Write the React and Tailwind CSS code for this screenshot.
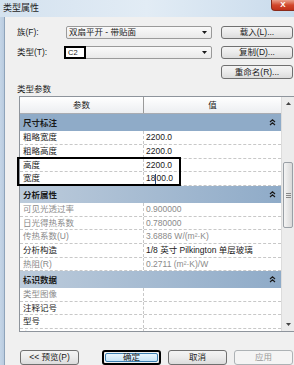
import React from "react";

const groups = [
  {
    name: "尺寸标注",
    bg: "bg-[#8fabc8]",
    rows: [
      { k: "粗略宽度", v: "2200.0", h: "h-[14px]" },
      { k: "粗略高度", v: "2200.0", h: "h-[14px]" },
      { k: "高度", v: "2200.0", h: "h-[13px]" },
      { k: "宽度", v: "1800.0", h: "h-[14px]", cursor: true },
    ],
  },
  {
    name: "分析属性",
    bg: "bg-gradient-to-r from-[#bccbdb] to-[#8fabc8]",
    rows: [
      { k: "可见光透过率", v: "0.900000", h: "h-[14px]", dim: true },
      { k: "日光得热系数", v: "0.780000", h: "h-[13px]", dim: true },
      { k: "传热系数(U)", v: "3.6886 W/(m²·K)", h: "h-[14px]", dim: true },
      { k: "分析构造", v: "1/8 英寸 Pilkington 单层玻璃", h: "h-[14px]" },
      { k: "热阻(R)", v: "0.2711 (m²·K)/W", h: "h-[13px]", dim: true },
    ],
  },
  {
    name: "标识数据",
    bg: "bg-gradient-to-r from-[#bccbdb] to-[#8fabc8]",
    rows: [
      { k: "类型图像", v: "", h: "h-[14px]", dim: true },
      { k: "注释记号", v: "", h: "h-[13px]" },
      { k: "型号", v: "", h: "h-[14px]" },
      { k: "制造商", v: "", h: "h-[14px]" },
    ],
  },
];

const Chevrons = () => (
  <svg width="7" height="7" viewBox="0 0 7 7" className="shrink-0">
    <path d="M1 3 L3.5 0.8 L6 3 M1 6 L3.5 3.8 L6 6" fill="none" stroke="#1a1a1a" strokeWidth="1.2" />
  </svg>
);

const Arrow = () => (
  <svg width="5" height="3" viewBox="0 0 5 3">
    <path d="M0 0 L5 0 L2.5 3 Z" fill="#1a1a1a" />
  </svg>
);

const Btn = ({ children, w = "w-[72px]", extra = "" }) => (
  <div
    className={`${w} h-full flex items-center justify-center rounded-[3px] border border-[#707070] bg-gradient-to-b from-[#f4f4f4] via-[#ebebeb] to-[#dcdcdc] text-[#1a1a1a] ${extra}`}
  >
    {children}
  </div>
);

const App = () => {
  return (
    <div className="w-[294px] h-[365px] relative overflow-hidden flex flex-col bg-[#c8d8e9] text-[8.5px] leading-none font-['Liberation_Sans','Noto_Sans_CJK_SC',sans-serif] text-[#1a1a1a]">
      {/* title bar */}
      <div className="h-[17px] flex items-start bg-gradient-to-r from-[#d4e2ef] via-[#e2ecf5] to-[#c9dbec]">
        <span className="pl-[3px] pt-[4px] text-[9px] text-[#1e1e1e]">类型属性</span>
        <div className="ml-auto w-[23px] h-[11px] rounded-bl-[4px] bg-gradient-to-b from-[#e8a08c] via-[#d2472c] to-[#c0301a] border border-[#8a2a1a] border-t-0 border-r-0 flex items-center justify-center text-white text-[8px] font-bold">
          X
        </div>
      </div>

      <div className="flex-1 flex">
        <div className="w-[5px] bg-gradient-to-r from-[#c4d5e7] to-[#b9cbdf] border-r border-[#8ea3ba]" />

        <div className="flex-1 bg-[#f0f0f0] flex flex-col pl-[12px] pt-[9px]">
          {/* family row */}
          <div className="flex items-center h-[13px]">
            <span className="w-[49px]">族(F):</span>
            <div className="w-[146px] h-full flex items-center rounded-[2px] border border-[#9a9a9a] bg-gradient-to-b from-[#fafafa] to-[#e9e9e9] pl-[2px] pr-[4px]">
              <span>双扇平开 - 带贴面</span>
              <span className="ml-auto"><Arrow /></span>
            </div>
            <div className="w-[9px]" />
            <Btn>载入(L)...</Btn>
          </div>

          {/* type row */}
          <div className="flex items-center h-[13px] mt-[7px]">
            <span className="w-[49px]">类型(T):</span>
            <div className="relative w-[146px] h-full flex items-center rounded-[2px] border border-[#9a9a9a] bg-gradient-to-b from-[#fafafa] to-[#e9e9e9] pr-[4px]">
              <div className="absolute left-[-3px] top-[-1px] w-[22px] h-[13px] border-2 border-black bg-white flex items-center pl-[2px] text-[7.5px]">
                C2
              </div>
              <span className="ml-auto"><Arrow /></span>
            </div>
            <div className="w-[9px]" />
            <Btn>复制(D)...</Btn>
          </div>

          {/* rename */}
          <div className="flex items-center h-[14px] mt-[6px]">
            <div className="w-[204px]" />
            <Btn>重命名(R)...</Btn>
          </div>

          <div className="mt-[4px] h-[13px] flex items-center">类型参数</div>

          {/* table */}
          <div className="ml-[2px] h-[236px] flex border border-[#8e949c] border-r-0 overflow-hidden bg-white">
            <div className="flex-1 flex flex-col">
              <div className="h-[17px] shrink-0 flex bg-gradient-to-b from-[#ffffff] to-[#eceef1] border-b border-[#a9acb2]">
                <div className="w-[124px] flex items-center justify-center border-r border-[#9a9a9a]">参数</div>
                <div className="flex-1 flex items-center justify-center">值</div>
              </div>
              {groups.map((g) => (
                <div key={g.name} className="flex flex-col">
                  <div className={`h-[17px] shrink-0 flex items-center pl-[3px] pr-[5px] font-semibold text-[#1a1a1a] ${g.bg}`}>
                    <span className="font-['Noto_Sans_CJK_SC',sans-serif]">{g.name}</span>
                    <span className="ml-auto"><Chevrons /></span>
                  </div>
                  {g.rows.map((r) => (
                    <div key={r.k} className={`${r.h} shrink-0 flex border-b border-dashed border-[#c8c8c8] ${r.dim ? "text-[#8a8a8a]" : "text-[#1a1a1a]"}`}>
                      <div className="w-[124px] flex items-center pl-[3px] border-r border-dashed border-[#c8c8c8]">{r.k}</div>
                      <div className="flex-1 flex items-center pl-[2px] whitespace-nowrap">
                        {r.cursor ? (
                          <>
                            18<span className="inline-block w-px h-[10px] bg-[#2a4a7a]" />00.0
                          </>
                        ) : (
                          r.v
                        )}
                      </div>
                    </div>
                  ))}
                </div>
              ))}
            </div>
            {/* scrollbar */}
            <div className="w-[13px] flex flex-col bg-[#ececec] border-l border-[#dcdcdc]">
              <div className="h-[13px] flex items-center justify-center">
                <svg width="5" height="3" viewBox="0 0 5 3"><path d="M0 3 L5 3 L2.5 0 Z" fill="#444" /></svg>
              </div>
              <div className="h-[52px]" />
              <div className="mx-[1px] h-[66px] rounded-[2px] border border-[#9aa0a6] bg-gradient-to-r from-[#f4f4f4] to-[#d9d9d9] flex flex-col items-center justify-center gap-[1px]">
                <div className="w-[5px] h-px bg-[#888]" />
                <div className="w-[5px] h-px bg-[#888]" />
                <div className="w-[5px] h-px bg-[#888]" />
              </div>
              <div className="flex-1" />
              <div className="h-[13px] flex items-center justify-center">
                <svg width="5" height="3" viewBox="0 0 5 3"><path d="M0 0 L5 0 L2.5 3 Z" fill="#444" /></svg>
              </div>
            </div>
          </div>

          {/* bottom buttons */}
          <div className="mt-[18px] h-[15px] flex items-center pl-[3px]">
            <Btn w="w-[59px]">&lt;&lt; 预览(P)</Btn>
            <div className="w-[23px]" />
            <div className="w-[59px] h-full rounded-[3px] border-2 border-black p-px">
              <div className="w-full h-full flex items-center justify-center rounded-[2px] border border-[#3c7fb1] bg-gradient-to-b from-[#eaf6fd] to-[#c6e4f7]">
                确定
              </div>
            </div>
            <div className="w-[7px]" />
            <Btn w="w-[59px]">取消</Btn>
            <div className="w-[7px]" />
            <div className="w-[59px] h-full flex items-center justify-center rounded-[3px] border border-[#adb2b5] bg-[#f4f4f4] text-[#9a9a9a]">
              应用
            </div>
          </div>
        </div>
      </div>

      {/* highlight frame around 高度 / 宽度 */}
      <div className="absolute left-[17px] top-[157px] w-[164px] h-[29px] border-2 border-black pointer-events-none" />
    </div>
  );
};

export default App;
